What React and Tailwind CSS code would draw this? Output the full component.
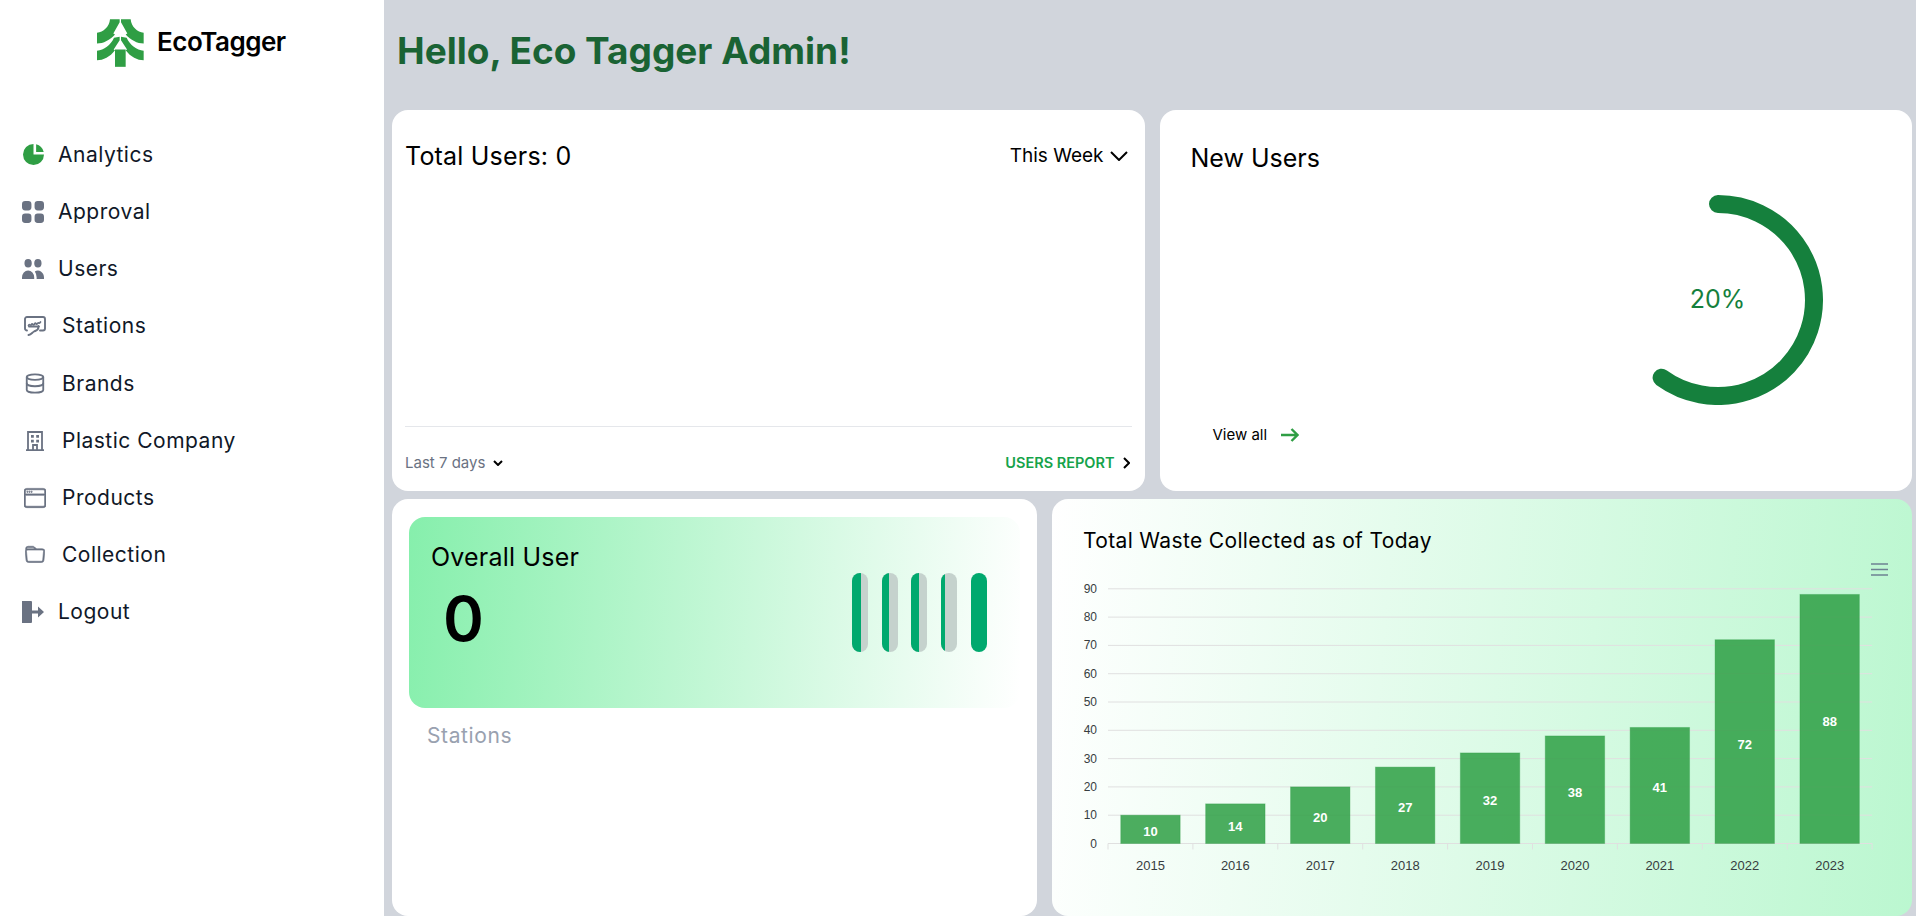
import React from 'react';
import { BsWindow, BsFolder } from 'react-icons/bs';
import { Database } from 'lucide-react';

function PieIcon() {
  return (
    <svg viewBox="2 2 16 16" className="w-[21px] h-[21px] text-[#2f9e44]" fill="currentColor">
      <path d="M2 10a8 8 0 018-8v8h8a8 8 0 11-16 0z" />
      <path d="M12 2.252A8.014 8.014 0 0117.748 8H12V2.252z" />
    </svg>
  );
}

function GridIcon() {
  return (
    <svg viewBox="3 3 14 14" className="w-[22px] h-[22px] text-gray-500" fill="currentColor">
      <path d="M5 3a2 2 0 00-2 2v2a2 2 0 002 2h2a2 2 0 002-2V5a2 2 0 00-2-2H5zM5 11a2 2 0 00-2 2v2a2 2 0 002 2h2a2 2 0 002-2v-2a2 2 0 00-2-2H5zM11 5a2 2 0 012-2h2a2 2 0 012 2v2a2 2 0 01-2 2h-2a2 2 0 01-2-2V5zM11 13a2 2 0 012-2h2a2 2 0 012 2v2a2 2 0 01-2 2h-2a2 2 0 01-2-2v-2z" />
    </svg>
  );
}

function UsersIcon() {
  return (
    <svg viewBox="1 3 18 14" preserveAspectRatio="none" className="w-[22px] h-[20px] text-gray-500" fill="currentColor">
      <path d="M9 6a3 3 0 11-6 0 3 3 0 016 0zM17 6a3 3 0 11-6 0 3 3 0 016 0zM12.93 17c.046-.327.07-.66.07-1a6.97 6.97 0 00-1.5-4.33A5 5 0 0119 16v1h-6.07zM6 11a5 5 0 015 5v1H1v-1a5 5 0 015-5z" />
    </svg>
  );
}

function StationIcon() {
  return (
    <svg viewBox="0 0 22 20" className="w-[22px] h-[20px] text-gray-500" fill="none" stroke="currentColor" strokeWidth="1.9" strokeLinecap="round">
      <path d="M3 14.500a2 2 0 0 1-2-2V3a2 2 0 0 1 2-2h16a2 2 0 0 1 2 2v9.500a2 2 0 0 1-2 2h-3" />
      <path d="M4.500 9.500c1-2.500 2 1 3-1s1.500 2 3-.5 1.500 1.500 3-.5 1.500 1 3-1.500" strokeWidth="1.700" />
      <path d="M5 10.500h10M14.500 10c.5 4.500-2.500 4.500-4.500 5.500s-2.500 3-5.500 3.500" />
    </svg>
  );
}

function BuildingIcon() {
  return (
    <svg viewBox="0 0 18 20" className="w-[18px] h-[20px] text-gray-500" fill="none" stroke="currentColor" strokeWidth="1.8">
      <path d="M0 19.100h18M2 19V1h14v18" />
      <path d="M7 19v-5h4v5" />
      <path d="M5 4h2.800v2.800H5zM10.200 4H13v2.800h-2.800zM5 8.800h2.800v2.800H5zM10.200 8.800H13v2.800h-2.800z" fill="currentColor" stroke="none" />
    </svg>
  );
}

function LogoutIcon() {
  return (
    <svg viewBox="0 0 22 22" className="w-[22px] h-[22px] text-gray-500" fill="currentColor">
      <path d="M0 0h9a1 1 0 0 1 1 1v20a1 1 0 0 1-1 1H0z" />
      <path d="M10 9.500h6V5.500L22 11l-6 5.500v-4h-6z" />
    </svg>
  );
}

const navItems = [
  { label: 'Analytics', icon: <PieIcon /> },
  { label: 'Approval', icon: <GridIcon /> },
  { label: 'Users', icon: <UsersIcon /> },
  { label: 'Stations', icon: <StationIcon />, inset: true },
  { label: 'Brands', icon: <Database className="w-[25px] h-[25px] text-gray-500" strokeWidth={2} />, inset: true },
  { label: 'Plastic Company', icon: <BuildingIcon />, inset: true },
  { label: 'Products', icon: <BsWindow className="w-[22px] h-[22px] text-gray-500" strokeWidth={0.5} />, inset: true },
  { label: 'Collection', icon: <BsFolder className="w-[20px] h-[20px] text-gray-500" strokeWidth={0.5} />, inset: true },
  { label: 'Logout', icon: <LogoutIcon /> },
];

function Logo() {
  return (
    <svg viewBox="291 57 141 143" className="w-[47px] h-[48px] text-[#2f9e44]" fill="currentColor">
      <path d="M330 57H359V66L340 100L345 103C330 120 310 130 291 130V98C310 95 328 80 330 57Z" />
      <path d="M342 113L359 110V120L341 148L345 150C330 170 310 180 291 180V152C312 150 332 135 342 113Z" />
      <g transform="matrix(-1 0 0 1 722 0)">
        <path d="M330 57H359V66L340 100L345 103C330 120 310 130 291 130V98C310 95 328 80 330 57Z" />
        <path d="M342 113L359 110V120L341 148L345 150C330 170 310 180 291 180V152C312 150 332 135 342 113Z" />
      </g>
      <path d="M345 148H377V200H345Z" />
    </svg>
  );
}

function Sidebar() {
  return (
    <aside className="w-[384px] h-[916px] bg-white shrink-0">
      <div className="h-[126px] flex items-start pl-[97px] pt-[19px] gap-[13px]">
        <Logo />
        <span className="text-[26px] leading-[46px] font-semibold text-black tracking-[-0.5px]">EcoTagger</span>
      </div>
      <nav className="flex flex-col">
        {navItems.map((item) => (
          <div
            key={item.label}
            className={item.inset ? 'h-[57.2px] flex items-center pl-[24px] gap-[16px]' : 'h-[57.2px] flex items-center pl-[22px] gap-[14px]'}
          >
            <span className="w-[22px] flex justify-center">{item.icon}</span>
            <span className="text-[21px] tracking-[0.5px] text-gray-900">{item.label}</span>
          </div>
        ))}
      </nav>
    </aside>
  );
}

function TotalUsersCard() {
  return (
    <div className="bg-white rounded-2xl h-[381px] px-[13px] flex flex-col">
      <div className="flex justify-between items-center pt-[30px]">
        <span className="text-[25px] leading-8 tracking-[0.2px] text-black">Total Users: 0</span>
        <span className="flex items-center gap-[6px] text-[19px] text-black pr-[4px]">
          This Week
          <svg viewBox="0 0 18 10" className="w-[18px] h-[10px]" fill="none" stroke="currentColor" strokeWidth="2">
            <path d="M1 1l8 8 8-8" />
          </svg>
        </span>
      </div>
      <div className="flex-1" />
      <div className="border-t border-gray-200 h-[65px] flex justify-between items-center pt-[8px]">
        <span className="flex items-center gap-[8px] text-[15px] text-gray-500">
          Last 7 days
          <svg viewBox="0 0 10 6" className="w-[10px] h-[6px] text-black" fill="none" stroke="currentColor" strokeWidth="2">
            <path d="M1 1l4 4 4-4" />
          </svg>
        </span>
        <span className="flex items-center gap-[8px] text-[14.500px] font-semibold text-[#16a34a] pr-[2px]">
          USERS REPORT
          <svg viewBox="0 0 7 12" className="w-[7px] h-[12px] text-black" fill="none" stroke="currentColor" strokeWidth="2">
            <path d="M1 1l5 5-5 5" />
          </svg>
        </span>
      </div>
    </div>
  );
}

function NewUsersCard() {
  return (
    <div className="bg-white rounded-2xl h-[381px] relative pl-[31px] pt-[32px]">
      <h3 className="text-[25px] leading-8 text-black">New Users</h3>
      <div className="absolute left-[453px] top-[85px] w-[210px] h-[210px]">
        <svg viewBox="0 0 210 210" className="w-full h-full" fill="none">
          <path d="M105 9A96 96 0 1 1 48.600 182.700" stroke="#15803d" strokeWidth="18" strokeLinecap="round" />
        </svg>
        <span className="absolute inset-0 flex items-center justify-center text-[25px] text-[#15803d]">20%</span>
      </div>
      <div className="absolute left-[53px] top-[314px] flex items-center gap-[14px] text-[15px] text-black">
        View all
        <svg viewBox="0 0 18 14" className="w-[18px] h-[14px] text-[#2f9e44]" fill="none" stroke="currentColor" strokeWidth="2.4">
          <path d="M0 7h16M10.500 1l6 6-6 6" />
        </svg>
      </div>
    </div>
  );
}

function OverallCard() {
  const levels = ['w-[9px]', 'w-[7px]', 'w-[8px]', 'w-[4px]', 'w-[16px]'];
  return (
    <div className="bg-white rounded-2xl h-[417px] pt-[18px] px-[17px]">
      <div className="h-[191px] w-[611px] rounded-2xl bg-[linear-gradient(95deg,#86efac,#ffffff)] flex justify-between pl-[22px] pr-[33px]">
        <div>
          <div className="text-[25px] leading-8 tracking-[0.2px] text-black pt-[24px]">Overall User</div>
          <div className="text-[62px] leading-[64px] font-semibold text-black pl-[12px] pt-[14px]">0</div>
        </div>
        <div className="flex gap-[13.800px] pt-[56px]">
          {levels.map((w, i) => (
            <div key={i} className="w-[16px] h-[79px] rounded-full bg-[#c5d2cd] overflow-hidden">
              <div className={w + ' h-full bg-[#00a96e]'} />
            </div>
          ))}
        </div>
      </div>
      <div className="text-[21px] tracking-[0.6px] text-gray-400 pl-[18px] pt-[12px]">Stations</div>
    </div>
  );
}

const chartData = [
  { year: 2015, value: 10 },
  { year: 2016, value: 14 },
  { year: 2017, value: 20 },
  { year: 2018, value: 27 },
  { year: 2019, value: 32 },
  { year: 2020, value: 38 },
  { year: 2021, value: 41 },
  { year: 2022, value: 72 },
  { year: 2023, value: 88 },
];

function WasteChart() {
  const x0 = 56;
  const step = 84.9;
  const y0 = 290.5;
  const unit = 2.83;
  const ticks = [0, 10, 20, 30, 40, 50, 60, 70, 80, 90];
  return (
    <svg width="860" height="340" className="block font-['Liberation_Sans',sans-serif]">
      {ticks.map((t) => (
        <g key={t}>
          <line x1={x0} x2={x0 + step * 9} y1={y0 - t * unit} y2={y0 - t * unit} stroke="#e0e0e0" />
          <text x={45} y={y0 - t * unit} textAnchor="end" dominantBaseline="central" fontSize="12" fill="#373d3f">{t}</text>
        </g>
      ))}
      {chartData.map((d, i) => (
        <line key={d.year} x1={x0 + step * i} x2={x0 + step * i} y1={y0} y2={y0 + 6} stroke="#e0e0e0" />
      ))}
      <line x1={x0 + step * 9} x2={x0 + step * 9} y1={y0} y2={y0 + 6} stroke="#e0e0e0" />
      {chartData.map((d, i) => {
        const h = d.value * unit;
        const cx = x0 + step * i + step / 2;
        return (
          <g key={d.year}>
            <rect x={cx - 29.7} y={y0 - h} width="59.4" height={h} fill="#2e9f44" fillOpacity="0.85" stroke="#2e9f44" strokeOpacity="0.35" />
            <text x={cx} y={y0 - h / 2 + 2.5} textAnchor="middle" dominantBaseline="central" fontSize="13" fontWeight="700" fill="#fff">{d.value}</text>
            <text x={cx} y={y0 + 22} textAnchor="middle" dominantBaseline="central" fontSize="13" fill="#373d3f">{d.year}</text>
          </g>
        );
      })}
      <path d="M819 11h17M819 16.500h17M819 22h17" stroke="#6e8192" strokeWidth="1.600" fill="none" />
    </svg>
  );
}

function ChartCard() {
  return (
    <div className="rounded-2xl h-[417px] bg-[linear-gradient(95deg,#ffffff,#bbf7d0)] pt-[29px]">
      <h3 className="pl-[31px] text-[21px] leading-[25px] tracking-[0.35px] text-black">Total Waste Collected as of Today</h3>
      <WasteChart />
    </div>
  );
}

export default function App() {
  return (
    <div className="flex h-[916px] w-[1916px] overflow-hidden font-['Inter','sans-serif']">
      <Sidebar />
      <main className="flex-1 bg-gray-300 pl-[8px] pr-[4px]">
        <div className="h-[110px] pl-[5px] pt-[27px]">
          <h1 className="text-[37px] leading-[48px] font-bold text-[#1a6334]">Hello, Eco Tagger Admin!</h1>
        </div>
        <div className="grid grid-cols-2 gap-[15px]">
          <TotalUsersCard />
          <NewUsersCard />
        </div>
        <div className="grid grid-cols-[645px_1fr] gap-[15px] mt-[8px]">
          <OverallCard />
          <ChartCard />
        </div>
      </main>
    </div>
  );
}
